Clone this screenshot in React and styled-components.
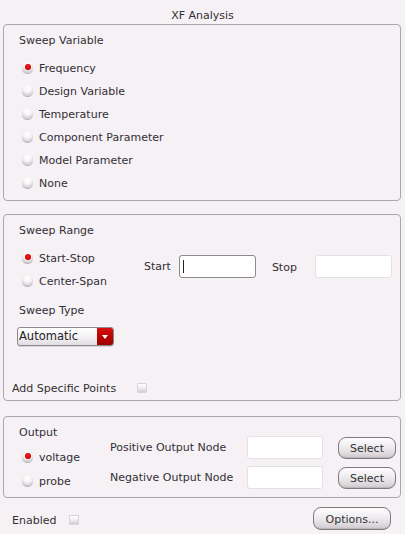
import React from 'react'
import styled, { createGlobalStyle } from 'styled-components'

const GlobalStyle = createGlobalStyle`
  html, body {
    margin: 0;
    padding: 0;
    background: #f5f1f5;
  }
  body {
    font-family: "DejaVu Sans", "Liberation Sans", sans-serif;
    font-size: 11px;
    color: #333033;
  }
`

const Page = styled.div`
  width: 405px;
  height: 534px;
  overflow: hidden;
`

const Title = styled.div`
  height: 24px;
  line-height: 13px;
  padding-top: 9px;
  box-sizing: border-box;
  text-align: center;
`

const Group = styled.div`
  margin: ${(p) => p.$top || 0}px 4px 0 3px;
  border: 1px solid #aaa6aa;
  border-radius: 4px;
  padding: 9px 0 ${(p) => p.$bottom || 5}px 15px;
`

const Label = styled.div`
  line-height: 13px;
  margin-top: ${(p) => p.$top || 0}px;
  margin-left: ${(p) => p.$left || 0}px;
`

const RadioList = styled.div`
  margin-top: ${(p) => p.$top || 10}px;
  display: flex;
  flex-direction: column;
`

const RadioRow = styled.div`
  height: ${(p) => p.$h || 23}px;
  display: flex;
  align-items: center;
  gap: 6px;
  padding-left: 3px;
`

const RadioDot = styled.span`
  width: 11px;
  height: 11px;
  border-radius: 50%;
  box-sizing: border-box;
  background: radial-gradient(circle at 50% 30%, #ffffff 0%, #f6f4f6 40%, #d2ced2 75%, #a8a4a8 100%);
  box-shadow: 0 1px 0 rgba(110, 106, 110, 0.45);
  position: relative;
  margin-top: -2px;
  &::after {
    content: '';
    display: ${(p) => (p.$on ? 'block' : 'none')};
    position: absolute;
    left: 2.5px;
    top: 2px;
    width: 6px;
    height: 6px;
    border-radius: 50%;
    background: radial-gradient(circle at 50% 40%, #ff2020 0%, #d00000 60%, #900000 100%);
  }
`

const Radio = ({ on, children, h }) => (
  <RadioRow $h={h}>
    <RadioDot $on={on} />
    <span>{children}</span>
  </RadioRow>
)

const RangeRow = styled.div`
  display: flex;
  align-items: flex-start;
  margin-top: 10px;
`

const RangeRadios = styled.div`
  width: 125px;
  display: flex;
  flex-direction: column;
`

const Fields = styled.div`
  display: flex;
  align-items: center;
  margin-top: 8px;
`

const Input = styled.div`
  width: ${(p) => p.$w || 77}px;
  height: 23px;
  box-sizing: border-box;
  background: #ffffff;
  border: 1px solid ${(p) => (p.$focus ? '#8e8a8e' : '#e4e0e4')};
  border-radius: 3px;
  position: relative;
  &::after {
    content: '';
    display: ${(p) => (p.$focus ? 'block' : 'none')};
    position: absolute;
    left: 3px;
    top: 4px;
    width: 1px;
    height: 13px;
    background: #222;
  }
`

const FieldLabel = styled.span`
  margin-left: ${(p) => p.$ml || 0}px;
  margin-right: ${(p) => p.$mr || 0}px;
  margin-top: ${(p) => p.$mt || 0}px;
`

const Dropdown = styled.div`
  margin: 10px 0 0 -2px;
  width: 97px;
  height: 19px;
  box-sizing: border-box;
  display: flex;
  border: 1px solid #8c888c;
  border-radius: 3px;
  overflow: hidden;
  background: linear-gradient(#ffffff, #f2eff2 60%, #e0dce0);
  box-shadow: 0 1px 0 rgba(0, 0, 0, 0.12);
`

const DropText = styled.span`
  flex: 1;
  line-height: 17px;
  padding-left: 1px;
  font-size: 11.5px;
  color: #222;
`

const DropArrow = styled.span`
  width: 16px;
  display: flex;
  align-items: center;
  justify-content: center;
  background: linear-gradient(#d81010, #b80000 60%, #9a0000);
  &::before {
    content: '';
    border-left: 3.5px solid transparent;
    border-right: 3.5px solid transparent;
    border-top: 4px solid #ffffff;
  }
`

const CheckRow = styled.div`
  display: flex;
  align-items: center;
  margin: ${(p) => p.$m || 0};
  line-height: 13px;
`

const Check = styled.span`
  width: 10px;
  height: 10px;
  box-sizing: border-box;
  margin-left: ${(p) => p.$ml || 0}px;
  border: 1px solid #d8d4d8;
  border-radius: 1px;
  background: linear-gradient(#ffffff, #f0edf0 50%, #cfcbcf);
  margin-top: -1px;
`

const OutputRow = styled.div`
  display: flex;
  align-items: flex-start;
`

const OutputLeft = styled.div`
  width: 91px;
  display: flex;
  flex-direction: column;
`

const NodeGrid = styled.div`
  display: grid;
  grid-template-columns: 137px 76px 73px;
  grid-auto-rows: 23px;
  row-gap: 7px;
  align-items: center;
  margin-top: 10px;
`

const Button = styled.div`
  width: ${(p) => p.$w || 58}px;
  height: ${(p) => p.$h || 22}px;
  box-sizing: border-box;
  justify-self: end;
  display: flex;
  align-items: center;
  justify-content: center;
  border: 1px solid #7e7a7e;
  border-radius: 8px;
  background: linear-gradient(#fdfcfd, #efecef 45%, #d9d5d9 85%, #c8c4c8);
  box-shadow: inset 0 -1px 0 rgba(0, 0, 0, 0.08);
  color: #333;
  padding-top: 1px;
`

const Footer = styled.div`
  display: flex;
  justify-content: space-between;
  align-items: flex-start;
  padding: 9px 14px 0 12px;
`

export default function App() {
  return (
    <Page>
      <GlobalStyle />
      <Title>XF Analysis</Title>

      <Group>
        <Label>Sweep Variable</Label>
        <RadioList>
          <Radio on>Frequency</Radio>
          <Radio>Design Variable</Radio>
          <Radio>Temperature</Radio>
          <Radio>Component Parameter</Radio>
          <Radio>Model Parameter</Radio>
          <Radio>None</Radio>
        </RadioList>
      </Group>

      <Group $top={13} $bottom={5}>
        <Label>Sweep Range</Label>
        <RangeRow>
          <RangeRadios>
            <Radio on>Start-Stop</Radio>
            <Radio>Center-Span</Radio>
          </RangeRadios>
          <Fields>
            <FieldLabel $mr={8}>Start</FieldLabel>
            <Input $focus />
            <FieldLabel $ml={16} $mr={18} $mt={1}>Stop</FieldLabel>
            <Input />
          </Fields>
        </RangeRow>
        <Label $top={11}>Sweep Type</Label>
        <Dropdown>
          <DropText>Automatic</DropText>
          <DropArrow />
        </Dropdown>
        <CheckRow $m="36px 0 0 -7px">
          Add Specific Points
          <Check $ml={21} />
        </CheckRow>
      </Group>

      <Group $top={15} $bottom={4}>
        <OutputRow>
          <OutputLeft>
            <Label>Output</Label>
            <RadioList $top={6}>
              <Radio on h={24}>voltage</Radio>
              <Radio h={24}>probe</Radio>
            </RadioList>
          </OutputLeft>
          <NodeGrid>
            <span>Positive Output Node</span>
            <Input $w={76} />
            <Button>Select</Button>
            <span>Negative Output Node</span>
            <Input $w={76} />
            <Button>Select</Button>
          </NodeGrid>
        </OutputRow>
      </Group>

      <Footer>
        <CheckRow $m="7px 0 0 0">
          Enabled
          <Check $ml={13} />
        </CheckRow>
        <Button $w={78} $h={23}>Options...</Button>
      </Footer>
    </Page>
  )
}
